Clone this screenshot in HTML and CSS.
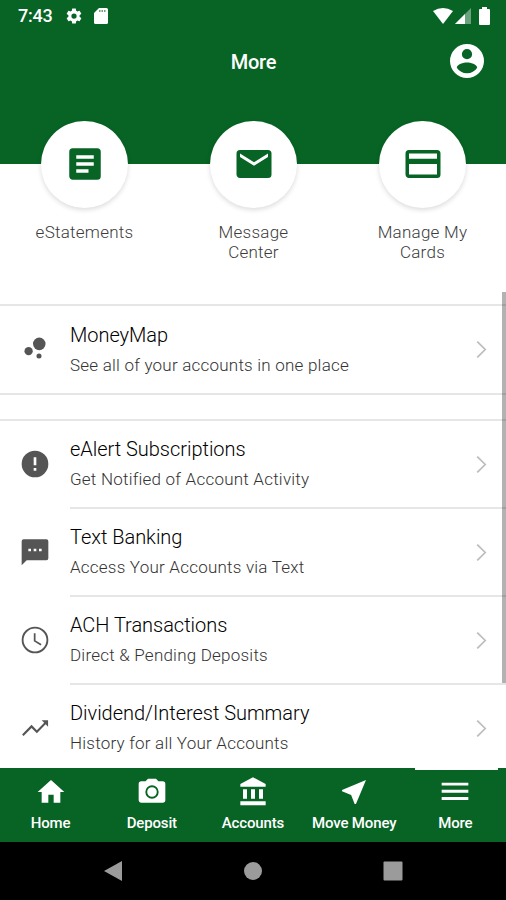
FILE: index.html
```
<!DOCTYPE html>
<html lang="en">
<head>
<meta charset="utf-8">
<title>More</title>
<link rel="stylesheet" href="styles.css">
</head>
<body>
<div class="phone">
  <header class="header">
    <div class="status">
      <span class="time">7:43</span>
      <svg class="gear" viewBox="0 0 24 24"><path d="M19.4 13a7.500 7.500 0 0 0 0-2l2.100-1.650a.5.5 0 0 0 .12-.64l-2-3.460a.5.5 0 0 0-.61-.22l-2.490 1a7.300 7.300 0 0 0-1.690-.98l-.38-2.650A.49.49 0 0 0 14 2h-4a.49.49 0 0 0-.49.42l-.38 2.650c-.61.25-1.170.59-1.690.98l-2.490-1a.49.49 0 0 0-.61.22l-2 3.460a.5.5 0 0 0 .12.640L4.570 11a7.900 7.900 0 0 0 0 2l-2.110 1.650a.5.5 0 0 0-.12.640l2 3.460c.12.22.39.3.61.22l2.490-1c.52.4 1.080.73 1.690.98l.38 2.650c.03.24.24.42.49.42h4c.25 0 .46-.18.49-.42l.38-2.650c.61-.25 1.170-.59 1.690-.98l2.490 1c.23.09.49 0 .61-.22l2-3.460a.5.5 0 0 0-.12-.64zM12 15.500a3.500 3.500 0 1 1 0-7 3.500 3.500 0 0 1 0 7z"/></svg>
      <svg class="sd" viewBox="0 0 14 16"><path d="M5 0h7.500Q14 0 14 1.500v13q0 1.500-1.500 1.500h-11Q0 16 0 14.500V5z"/><path class="cut" d="M5 2h1.500v2H5zM7.500 2H9v2H7.500zM10 2h1.500v2H10z"/></svg>
      <span class="spacer"></span>
      <svg class="wifi" viewBox="0 0 20 16"><path d="M0 3Q10-3 20 3L10 16z"/></svg>
      <svg class="signal" viewBox="0 0 16 16"><path class="dim" d="M16 0v16H0z"/><path d="M10 6v10H0z"/></svg>
      <svg class="battery" viewBox="0 0 11 18"><path d="M3 0h5v2h2q1 0 1 1v14q0 1-1 1H1q-1 0-1-1V3q0-1 1-1h2z"/></svg>
    </div>
    <div class="titlebar">
      <h1>More</h1>
      <svg viewBox="2 2 20 20"><path d="M12 2a10 10 0 1 0 0 20 10 10 0 0 0 0-20zm0 3a3 3 0 1 1 0 6 3 3 0 0 1 0-6zm0 14.200a7.200 7.200 0 0 1-6-3.220c.03-1.990 4-3.080 6-3.080s5.970 1.090 6 3.080a7.200 7.200 0 0 1-6 3.220z"/></svg>
    </div>
  </header>

  <section class="shortcuts">
    <a class="shortcut">
      <span class="disc"><svg viewBox="0 0 24 24"><path d="M19 3H5a2 2 0 0 0-2 2v14c0 1.100.9 2 2 2h14a2 2 0 0 0 2-2V5a2 2 0 0 0-2-2zm-5 14H7v-2h7zm3-4H7v-2h10zm0-4H7V7h10z"/></svg></span>
      <span class="caption">eStatements</span>
    </a>
    <a class="shortcut">
      <span class="disc"><svg viewBox="0 0 24 24"><path d="M20 4H4a2 2 0 0 0-2 2v12c0 1.100.9 2 2 2h16a2 2 0 0 0 2-2V6a2 2 0 0 0-2-2zm0 4-8 5-8-5V6l8 5 8-5z"/></svg></span>
      <span class="caption">Message<br>Center</span>
    </a>
    <a class="shortcut">
      <span class="disc"><svg viewBox="0 0 24 24"><path d="M20 4H4a2 2 0 0 0-2 2v12c0 1.100.9 2 2 2h16a2 2 0 0 0 2-2V6a2 2 0 0 0-2-2zm0 14H4v-6h16zm0-9H4V6h16z"/></svg></span>
      <span class="caption">Manage My<br>Cards</span>
    </a>
  </section>

  <main class="content">
    <ul class="list single">
      <li class="row">
        <svg class="icon" viewBox="0 0 24 24"><circle cx="7.200" cy="14.400" r="3.100"/><circle cx="15" cy="18" r="1.900"/><circle cx="15.200" cy="8.900" r="4.700"/></svg>
        <div class="body"><div class="text"><b>MoneyMap</b><span>See all of your accounts in one place</span></div><svg class="chevron" viewBox="0 0 10 16"><path d="m1 .5 7.500 7.500L1 15.500"/></svg></div>
      </li>
    </ul>
    <ul class="list">
      <li class="row">
        <svg class="icon" viewBox="0 0 24 24"><path d="M12 2a10 10 0 1 0 0 20 10 10 0 0 0 0-20zm1 15h-2v-2h2zm0-4h-2V7h2z"/></svg>
        <div class="body"><div class="text"><b>eAlert Subscriptions</b><span>Get Notified of Account Activity</span></div><svg class="chevron" viewBox="0 0 10 16"><path d="m1 .5 7.500 7.500L1 15.500"/></svg></div>
      </li>
      <li class="row">
        <svg class="icon" viewBox="0 0 24 24"><path d="M20.500 2.500h-17A1.500 1.500 0 0 0 2 4v18l3.800-3.800h14.700a1.500 1.500 0 0 0 1.500-1.500V4a1.500 1.500 0 0 0-1.500-1.500zM9 11.500H7v-2h2zm4 0h-2v-2h2zm4 0h-2v-2h2z"/></svg>
        <div class="body"><div class="text"><b>Text Banking</b><span>Access Your Accounts via Text</span></div><svg class="chevron" viewBox="0 0 10 16"><path d="m1 .5 7.500 7.500L1 15.500"/></svg></div>
      </li>
      <li class="row">
        <svg class="icon" viewBox="0 0 24 24"><path d="M12 2a10 10 0 1 0 0 20 10 10 0 0 0 0-20zm0 18.600a8.600 8.600 0 1 1 0-17.200 8.600 8.600 0 0 1 0 17.200zM12.400 7H11.100v6l5.100 3.100.7-1.100-4.500-2.700z"/></svg>
        <div class="body"><div class="text"><b>ACH Transactions</b><span>Direct &amp; Pending Deposits</span></div><svg class="chevron" viewBox="0 0 10 16"><path d="m1 .5 7.500 7.500L1 15.500"/></svg></div>
      </li>
      <li class="row">
        <svg class="icon" viewBox="0 0 24 24"><path d="m17 6.200 1.900 1.900-5.500 5.500-4-4L2.300 16.900l1.100 1.100 6-6 4 4 6.600-6.800L21.800 11V6.200z"/></svg>
        <div class="body"><div class="text"><b>Dividend/Interest Summary</b><span>History for all Your Accounts</span></div><svg class="chevron" viewBox="0 0 10 16"><path d="m1 .5 7.500 7.500L1 15.500"/></svg></div>
      </li>
    </ul>
    <div class="scrollbar"></div>
  </main>

  <nav class="tabs">
    <a class="tab"><svg viewBox="0 0 24 24"><path d="M10 20v-6h4v6h5v-8h3L12 3 2 12h3v8z"/></svg><span>Home</span></a>
    <a class="tab"><svg viewBox="0 0 24 24"><path fill-rule="evenodd" d="M9 2 7.170 4H4a2 2 0 0 0-2 2v12c0 1.100.9 2 2 2h16a2 2 0 0 0 2-2V6a2 2 0 0 0-2-2h-3.170L15 2zm3 5a5 5 0 1 1 0 10 5 5 0 0 1 0-10zm0 1.400a3.600 3.600 0 1 0 0 7.200 3.600 3.600 0 0 0 0-7.200z"/></svg><span>Deposit</span></a>
    <a class="tab"><svg viewBox="-.5 0 24 24"><path d="M4 10v7h3v-7zm6 0v7h3v-7zM2 22h19v-3H2zm14-12v7h3v-7zM11.500 1 2 6v2h19V6z"/></svg><span>Accounts</span></a>
    <a class="tab"><svg viewBox="0 0 24 24"><path d="M21 3 3 10.530v.98l6.840 2.650L12.480 21h.98z"/></svg><span>Move Money</span></a>
    <a class="tab active"><svg viewBox="0 0 24 24"><path d="M2 5h20v2.200H2zm0 5.400h20v2.200H2zm0 5.400h20v2.200H2z"/></svg><span>More</span></a>
  </nav>
  <div class="sysnav">
    <svg viewBox="0 0 20 22"><path d="M19 1v20L1 11z"/></svg>
    <svg viewBox="0 0 20 22"><circle cx="10" cy="11" r="9"/></svg>
    <svg viewBox="0 0 20 22"><rect x=".5" y="1.500" width="19" height="19" rx="1"/></svg>
  </div>
</div>
</body>
</html>
```
FILE: styles.css
```
* { box-sizing: border-box; }
body { margin: 0; font-family: Roboto, "Liberation Sans", sans-serif; }
svg { display: block; flex: none; fill: currentColor; }
.phone { width: 506px; height: 900px; display: flex; flex-direction: column; background: #fff; overflow: hidden; }

.header { height: 164px; flex: none; background: #076424; color: #fff; }
.status { height: 32px; display: flex; align-items: center; padding: 0 16px 0 18px; }
.time { font-size: 18px; font-weight: 500; width: 47px; line-height: 32px; letter-spacing: -.2px; }
.gear { width: 18px; height: 18px; margin-right: 11px; }
.sd { width: 14px; height: 16px; }
.cut { fill: #076424; opacity: .6; }
.spacer { flex: 1; }
.wifi { width: 20px; height: 16px; margin-right: 2px; }
.signal { width: 16px; height: 16px; margin-right: 8px; }
.dim { opacity: .4; }
.battery { width: 11px; height: 18px; }
.titlebar { height: 60px; display: grid; grid-template-columns: 1fr auto 1fr; align-items: center; padding: 0 22px 0 23px; }
.titlebar h1 { grid-column: 2; margin: 0; font-size: 20px; font-weight: 500; letter-spacing: -.2px; }
.titlebar svg { width: 34px; height: 34px; justify-self: end; margin: -3px 1px 0 0; margin-right: 0; }

.shortcuts { height: 140px; flex: none; display: grid; grid-template-columns: repeat(3, 1fr); margin-right: -1px; }
.shortcut { display: flex; flex-direction: column; align-items: center; margin-top: -43px; }
.disc { width: 87px; height: 87px; flex: none; border-radius: 50%; background: #fff; color: #076424; display: grid; place-items: center; padding-bottom: 1px; box-shadow: 0 2px 5px rgba(0,0,0,.14); }
.disc svg { width: 42px; height: 42px; }
.caption { margin-top: 14px; font-size: 17px; line-height: 20px; letter-spacing: .25px; text-align: center; color: #3c3c3c; font-weight: 300; }

.content { flex: none; height: 464px; position: relative; }
.list { margin: 0; padding: 0; list-style: none; border-top: 2px solid #e6e6e6; }
.single { border-bottom: 2px solid #e6e6e6; margin-bottom: 24px; }
.row { height: 88px; display: flex; align-items: center; padding-left: 19px; color: #555; }
.single .row { height: 87px; }
.icon { width: 32px; height: 32px; margin: -3px 19px 0 0; }
.body { flex: 1; height: 100%; display: flex; align-items: center; justify-content: space-between; border-bottom: 2px solid #e6e6e6; padding-right: 19px; }
.row:last-child .body { border-bottom: 0; padding-bottom: 2px; }
.single .row:last-child .body { padding-bottom: 0; }
.text { display: flex; flex-direction: column; }
.text b { font-size: 20px; line-height: 28px; font-weight: 300; letter-spacing: -.03px; color: #000; margin-top: 2px; }
.text span { font-size: 17px; line-height: 32px; font-weight: 300; letter-spacing: .22px; color: #333; }
.chevron { width: 11px; height: 17px; fill: none; stroke: #bdbdbd; stroke-width: 1.600; }
.scrollbar { position: absolute; right: 0; top: -12px; width: 4px; height: 391px; background: rgba(0,0,0,.3); }

.tabs { height: 74px; flex: none; display: grid; grid-template-columns: repeat(5, 1fr); background: #076424; color: #fff; position: relative; }
.tab { display: flex; flex-direction: column; align-items: center; padding-top: 8px; position: relative; }
.tab svg { width: 32px; height: 32px; }
.tab span { font-size: 15px; line-height: 20px; font-weight: 500; margin-top: 5px; white-space: nowrap; letter-spacing: -.15px; }
.active::before { content: ""; position: absolute; top: 0; left: 10px; width: 83px; height: 2px; background: #fff; }
.sysnav { flex: 1; background: #000; color: #9b9b9b; display: flex; align-items: center; justify-content: center; gap: 120px; }
.sysnav svg { width: 20px; height: 22px; }
```
